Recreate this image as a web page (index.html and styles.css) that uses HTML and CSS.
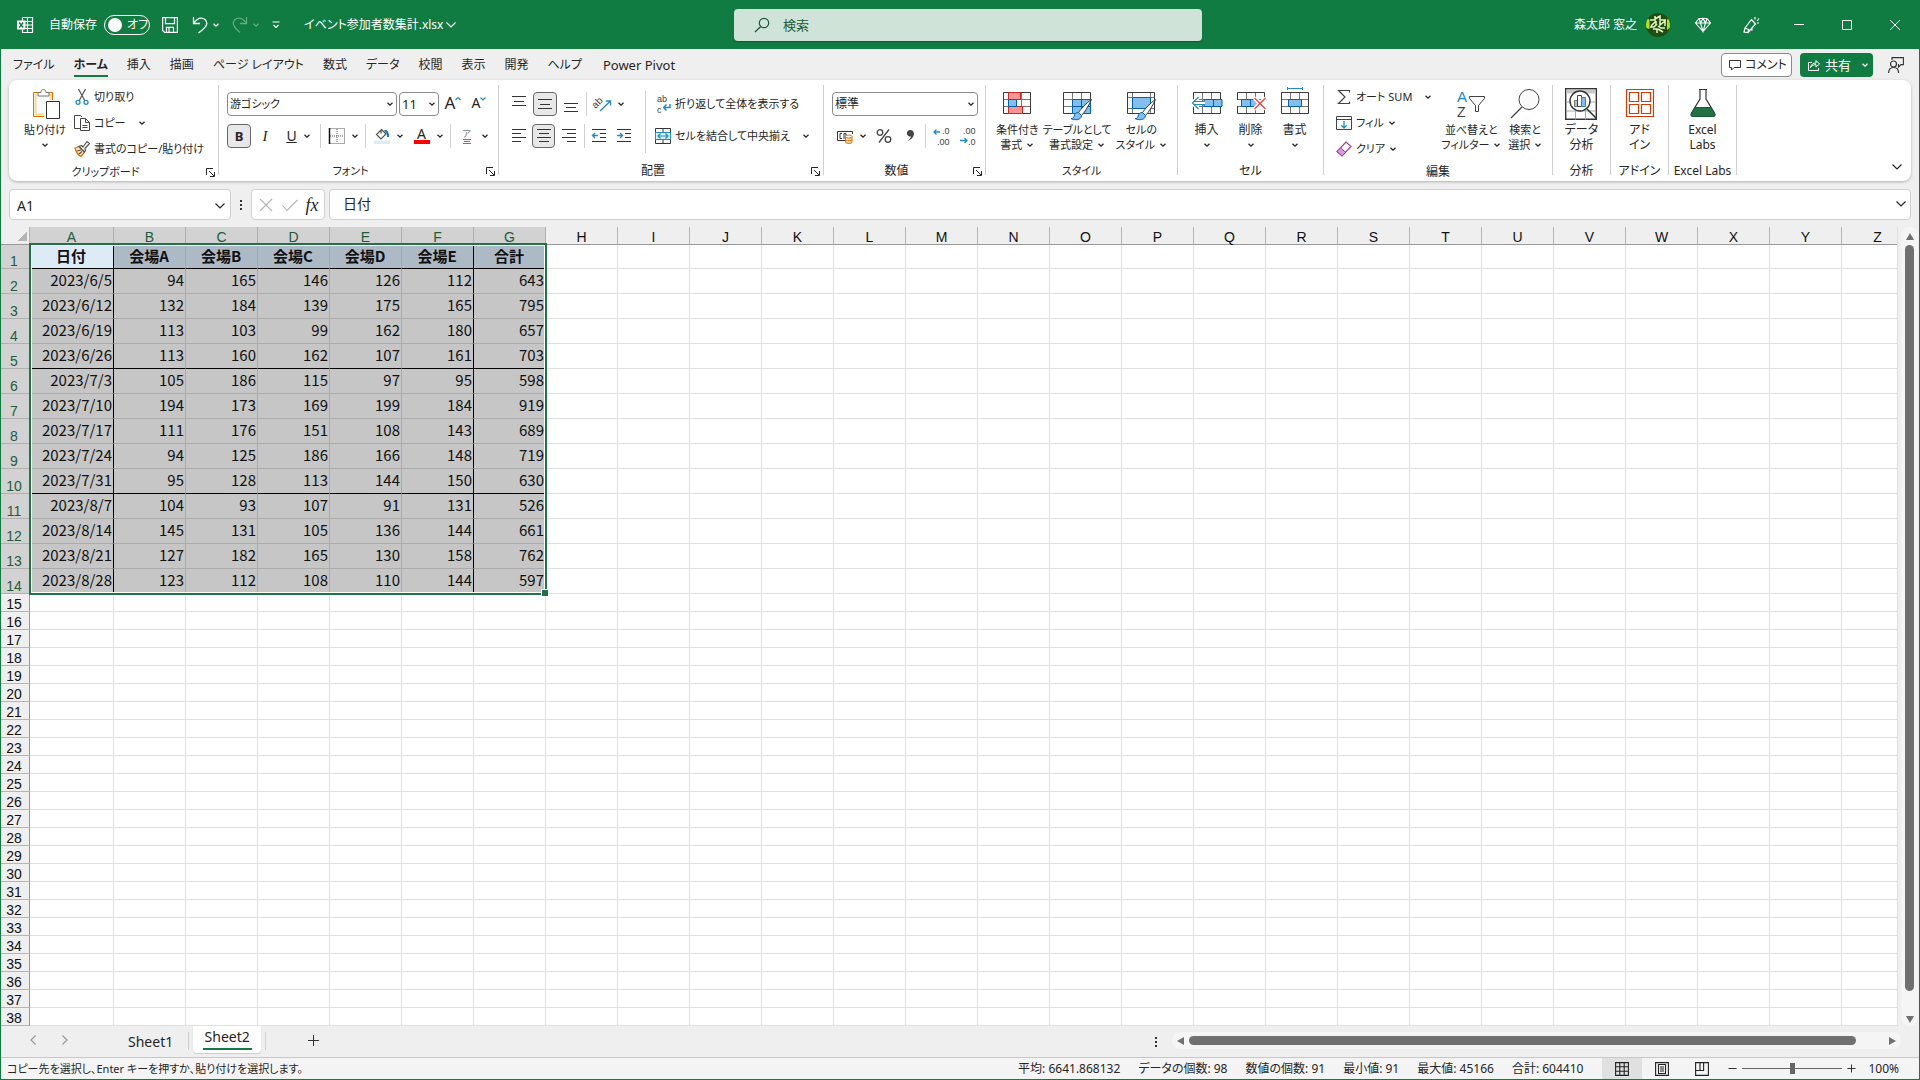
FILE: index.html
```html
<!DOCTYPE html>
<html lang="ja">
<head>
<meta charset="utf-8">
<title>イベント参加者数集計.xlsx</title>
<link rel="stylesheet" href="styles.css">
</head>
<body>
<svg class="sprite" aria-hidden="true">
  <symbol id="chev" viewBox="0 0 8 8"><path d="M1.5 2.7 4 5.2 6.500 2.700" fill="none" stroke="currentColor" stroke-width="1.3"/></symbol>
  <symbol id="chev-lg" viewBox="0 0 12 12"><path d="M1.500 3.500 6 8l4.500-4.500" fill="none" stroke="currentColor" stroke-width="1.200"/></symbol>
  <symbol id="launch" viewBox="0 0 9 9"><path d="M.5 7V.5H7M3 3l5 5M8.500 4v4.500H4" fill="none" stroke="currentColor"/></symbol>
  <symbol id="sheet" viewBox="0 0 32 32"><path d="M2.500 4.500h27v21h-27z" fill="#fafafa" stroke="#3b3b3b"/><path d="M11.500 5v20M20.500 5v20M3 11.500h26M3 18.500h26" stroke="#797774"/></symbol>
  <symbol id="brush" viewBox="0 0 24 24"><path d="M22.500 1.500C17 5 12 11 9.500 14.500l3 3C16 14 20 7 22.500 1.500z" fill="#fff" stroke="#3b3b3b"/><path d="M9.500 14.500c-3 0-4 1.500-4.500 4-.3 1.500-1.500 2-3 2 2.500 2 10.500 2 10.500-3z" fill="#83beec" stroke="#0063b1"/></symbol>
</svg>

<div class="window">
  <header class="titlebar">
    <div class="title-left">
      <svg class="i16 app" viewBox="0 0 16 16"><path d="M5.500.5h10v15h-10v-15M10.500.5v15M5.500 4.500h10M5.500 8h10M5.500 11.500h10" fill="none" stroke="#fff" stroke-width="1.200"/><path d="M0 3.500h8.500v9H0z" fill="#fff"/><path d="m2.200 5.500 4 5M6.200 5.500l-4 5" stroke="#107c41" stroke-width="1.400"/></svg>
      <label class="autosave">自動保存<span class="toggle"><input type="checkbox"><span class="knob"></span>オフ</span></label>
      <button class="tb save" aria-label="上書き保存"><svg class="i16" viewBox="0 0 16 16"><path d="M.6.600h14.800v14.800H2.600l-2-2zM3.500.600v6h9v-6M4.500 15.400v-5h7v5M7 10.400v5" fill="none" stroke="#fff" stroke-width="1.200"/></svg></button>
      <button class="tb" aria-label="元に戻す"><svg class="i16" viewBox="0 0 16 16"><path d="M1.500 0v6.500H8M1.500 6.500C4 3 6 1.200 9 1.200c3.500 0 5.800 2.500 5.800 5.300C14.800 9.500 12 12 6.500 16" fill="none" stroke="#fff" stroke-width="1.300"/></svg><svg class="c8"><use href="#chev"/></svg></button>
      <button class="tb dim" aria-label="やり直し"><svg class="i16" viewBox="0 0 16 16"><path d="M14.500 0v6.500H8M14.500 6.500C12 3 10 1.200 7 1.200c-3.500 0-5.800 2.500-5.800 5.300C1.200 9.500 4 12 8 15.500" fill="none" stroke="#fff" stroke-width="1.300"/></svg><svg class="c8"><use href="#chev"/></svg></button>
      <button class="tb" aria-label="クイック アクセス"><svg class="c8" viewBox="0 0 8 8"><path d="M.5 1h7M1.500 4 4 6.500 6.500 4" fill="none" stroke="#fff" stroke-width="1.200"/></svg></button>
      <button class="tb filename">イベント参加者数集計.xlsx<svg class="c12"><use href="#chev-lg"/></svg></button>
    </div>
    <label class="search"><svg class="i16" viewBox="0 0 16 16"><circle cx="10" cy="6" r="4.700" fill="none" stroke="#185c37" stroke-width="1.200"/><path d="M6.700 9.500 1 15" stroke="#185c37" stroke-width="1.200"/></svg><input type="text" placeholder="検索" aria-label="検索"></label>
    <div class="title-right">
      <span>森太郎 窓之</span>
      <svg class="avatar" viewBox="0 0 24 24"><circle cx="12" cy="12" r="12" fill="#1f4d12"/><path d="M2 5.500A12 12 0 0 0 .5 15l3 1V7zM22 5.500A12 12 0 0 1 23.500 15L21 17V7z" fill="#b5e61d"/><path d="M4 7h5V3M9 6l5-3v4h6M5 13l5-5M10 8v4M4 14h4l3-3M14 8v4l5-4v5M12 13l3 2h4M7 16h4v4M12 16l5 3" fill="none" stroke="#e9f7c8" stroke-width="1.500"/></svg>
      <button class="win" aria-label="プレミアム"><svg class="i16" viewBox="0 0 16 16"><path d="M4 1.500h8l3.500 4.500L8 14.500.5 6zM.5 6h15M4 1.500 5.500 6 8 14.500 10.500 6 12 1.500M5.500 6 8 1.500 10.500 6" fill="none" stroke="#fff" stroke-width="1.100"/></svg></button>
      <button class="win" aria-label="近日公開"><svg class="i16" viewBox="0 0 16 16"><path d="M8.500 2.500 2 11l-1 4 4 .500L12.500 7zM2 11l3.500 1.500L5 15.500M6 13h3v-2M12 0v2.500M14 4l2-2.500M14 6h2" fill="none" stroke="#fff" stroke-width="1.200"/></svg></button>
      <button class="win" aria-label="最小化"><svg class="i16" viewBox="0 0 16 16"><path d="M3 7.500h10" stroke="#fff"/></svg></button>
      <button class="win" aria-label="最大化"><svg class="i16" viewBox="0 0 16 16"><path d="M3.500 3.500h9v9h-9z" fill="none" stroke="#fff"/></svg></button>
      <button class="win" aria-label="閉じる"><svg class="i16" viewBox="0 0 16 16"><path d="m3 3 10 10M13 3 3 13" stroke="#fff"/></svg></button>
    </div>
  </header>

  <nav class="tabs">
    <a href="#">ファイル</a><a href="#" class="active">ホーム</a><a href="#">挿入</a><a href="#">描画</a><a href="#">ページ レイアウト</a><a href="#">数式</a><a href="#">データ</a><a href="#">校閲</a><a href="#">表示</a><a href="#">開発</a><a href="#">ヘルプ</a><a href="#" class="pivot">Power Pivot</a>
    <span class="grow"></span>
    <button class="comment"><svg class="c12" viewBox="0 0 12 12"><path d="M.5 1.500h11v7H5L2.500 11V8.500h-2z" fill="none" stroke="#333"/></svg>コメント</button>
    <button class="share"><svg class="c12" viewBox="0 0 12 12"><path d="M4 3.500H.5v8h10V9M2.500 8.500C3 5.500 5 4 8 4V1.500L11.500 5 8 8V5.700C5.500 5.700 3.500 6.500 2.500 8.500z" fill="none" stroke="#fff"/></svg>共有<svg class="c8"><use href="#chev"/></svg></button>
    <button class="present" aria-label="ユーザー"><svg class="i16" viewBox="0 0 16 16"><path d="M4 3V.600h11.400v7H13l-2.500 2.500V7" fill="none" stroke="#333" stroke-width="1.100"/><circle cx="5.500" cy="7" r="3" fill="none" stroke="#333" stroke-width="1.200"/><path d="M.6 16c0-3.500 2-5.500 5-5.500s5 2 5 5.500" fill="none" stroke="#333" stroke-width="1.200"/></svg></button>
  </nav>

  <section class="ribbon">
    <div class="group clip">
      <div class="body">
        <button class="big"><svg class="i32" viewBox="0 0 32 32"><path d="M5 5h18v24H5z" fill="#fafafa"/><path d="M15 28.500H4.500v-24h19V12" fill="none" stroke="#e07000"/><path d="M6.500 6v20.500H15M21.500 6v6" fill="none" stroke="#f8db8f" stroke-width="2"/><path d="M9 8V4.500h3c0-4 5-4 5 0h3V8z" fill="#fff" stroke="#777"/><path d="M17.500 13.500h13v17h-13z" fill="#fff" stroke="#333"/></svg>貼り付け<svg class="c8"><use href="#chev"/></svg></button>
        <div class="stack">
          <button class="small"><svg class="i16" viewBox="0 0 16 16"><path d="M4.500 0 11 12M11.500 0 5 12" stroke="#555" stroke-width="1.200"/><circle cx="4" cy="13.300" r="2" fill="none" stroke="#1e8bcd" stroke-width="1.300"/><circle cx="12" cy="13.300" r="2" fill="none" stroke="#1e8bcd" stroke-width="1.300"/></svg>切り取り</button>
          <button class="small"><svg class="i16" viewBox="0 0 16 16"><path d="M6 13.500H.5V.5h6L8 2M6.500 3.500h5l4 4v8h-9zM11.500 3.500v4h4M8.500 10.500h5M8.500 12.500h5" fill="none" stroke="#444"/></svg>コピー<svg class="c8 far"><use href="#chev"/></svg></button>
          <button class="small"><svg class="i16" viewBox="0 0 16 16"><path d="m1 7 4-1.500 5.500 5.500L7 15.500C4 14 2 11 1 7z" fill="#fbe3b8" stroke="#e07000" stroke-width="1.300"/><path d="m5 5.500 2.500-1L9 6l4-5.500 2.500 2L11 7.500l.5 2-1 1.500zM3 10l4-1M5 13l3-2.500" fill="none" stroke="#555" stroke-width="1.200"/></svg>書式のコピー/貼り付け</button>
        </div>
      </div>
      <div class="caption">クリップボード<button class="launch" aria-label="クリップボード設定"><svg class="c9"><use href="#launch"/></svg></button></div>
    </div>
    <span class="sep"></span>

    <div class="group font">
      <div class="body rows">
        <div class="row">
          <span class="combo fname"><input type="text" value="游ゴシック" aria-label="フォント名"><svg class="c8"><use href="#chev"/></svg></span>
          <span class="combo fsize"><input type="text" value="11" aria-label="フォント サイズ"><svg class="c8"><use href="#chev"/></svg></span>
          <button class="ib glyph-lg" aria-label="拡大">A<svg class="c6" viewBox="0 0 6 6"><path d="M.5 4 3 1.500 5.500 4" fill="none" stroke="#1e8bcd" stroke-width="1.200"/></svg></button>
          <button class="ib glyph-md" aria-label="縮小">A<svg class="c6" viewBox="0 0 6 6"><path d="M.5 1.500 3 4l2.500-2.500" fill="none" stroke="#1e8bcd" stroke-width="1.200"/></svg></button>
        </div>
        <div class="row">
          <button class="ib on bold">B</button>
          <button class="ib italic">I</button>
          <button class="ib split under"><u>U</u><svg class="c8"><use href="#chev"/></svg></button>
          <span class="bar"></span>
          <button class="ib split" aria-label="罫線"><svg class="i16" viewBox="0 0 16 16"><path d="M.5.500h15v15M8 1v14M1 8h14M.5 15.500h15" fill="none" stroke="#555" stroke-dasharray="1 1"/><path d="M.5 0v16" stroke="#111" stroke-width="1.500"/></svg><svg class="c8"><use href="#chev"/></svg></button>
          <span class="bar"></span>
          <button class="ib split" aria-label="塗りつぶし"><svg class="i16" viewBox="0 0 16 16"><path d="M0 12.500h16V16H0z" fill="#ddebf7"/><path d="M7 1.500v4M7.500 1.500 12 6l-5 5-4.500-4.500z" fill="none" stroke="#555" stroke-width="1.200"/><path d="M10.500 3c2-.5 3.500 1 3.500 6" fill="none" stroke="#1070b8" stroke-width="2"/></svg><svg class="c8"><use href="#chev"/></svg></button>
          <button class="ib split fcolor"><span>A</span><svg class="c8"><use href="#chev"/></svg></button>
          <span class="bar"></span>
          <button class="ib split ruby"><span>ア<i></i><i class="short"></i><i></i></span><svg class="c8"><use href="#chev"/></svg></button>
        </div>
      </div>
      <div class="caption">フォント<button class="launch" aria-label="フォント設定"><svg class="c9"><use href="#launch"/></svg></button></div>
    </div>
    <span class="sep"></span>

    <div class="group align">
      <div class="body">
        <div class="rows">
          <div class="row">
            <button class="ib" aria-label="上揃え"><svg class="i16" viewBox="0 0 16 16"><path d="M1 .5h14M3 5.500h10M1 9.500h14" stroke="#333"/></svg></button>
            <button class="ib on" aria-label="上下中央揃え"><svg class="i16" viewBox="0 0 16 16"><path d="M1 3.500h14M3 8.500h10M1 12.500h14" stroke="#333"/></svg></button>
            <button class="ib" aria-label="下揃え"><svg class="i16" viewBox="0 0 16 16"><path d="M1 7.500h14M3 11.500h10M1 15.500h14" stroke="#333"/></svg></button>
            <span class="bar"></span>
            <button class="ib split" aria-label="方向"><svg class="i16" viewBox="0 0 16 16"><text x="-2" y="9" transform="rotate(-45 4 8)" font-size="10" fill="#444">ab</text><path d="m5 15 10-9.500M11 5h4.500v4.500" fill="none" stroke="#1e8bcd" stroke-width="1.300"/></svg><svg class="c8"><use href="#chev"/></svg></button>
          </div>
          <div class="row">
            <button class="ib" aria-label="左揃え"><svg class="i16" viewBox="0 0 16 16"><path d="M1 1.500h14M1 5.500h9M1 9.500h14M1 13.500h9" stroke="#333"/></svg></button>
            <button class="ib on" aria-label="中央揃え"><svg class="i16" viewBox="0 0 16 16"><path d="M1 1.500h14M3 5.500h10M1 9.500h14M3 13.500h10" stroke="#333"/></svg></button>
            <button class="ib" aria-label="右揃え"><svg class="i16" viewBox="0 0 16 16"><path d="M1 1.500h14M6 5.500h9M1 9.500h14M6 13.500h9" stroke="#333"/></svg></button>
            <span class="bar"></span>
            <button class="ib" aria-label="インデントを減らす"><svg class="i16" viewBox="0 0 16 16"><path d="M1 1.500h14M9 5.500h6M9 9.500h6M1 13.500h14" stroke="#333"/><path d="M7 7.500H1.500M4 5 1.500 7.500 4 10" fill="none" stroke="#1e8bcd" stroke-width="1.300"/></svg></button>
            <button class="ib" aria-label="インデントを増やす"><svg class="i16" viewBox="0 0 16 16"><path d="M1 1.500h14M9 5.500h6M9 9.500h6M1 13.500h14" stroke="#333"/><path d="M1 7.500h5.500M4 5l2.500 2.500L4 10" fill="none" stroke="#1e8bcd" stroke-width="1.300"/></svg></button>
          </div>
        </div>
        <span class="bar tall"></span>
        <div class="rows">
          <button class="small"><svg class="i16" viewBox="0 0 16 16"><text x="2" y="6" font-size="9" fill="#444">ab</text><text x="2" y="17" font-size="9" fill="#444">c</text><path d="M15 8v3.500H9M11.500 8.500 8.700 11.500l2.800 3" fill="none" stroke="#1e8bcd" stroke-width="1.500"/></svg>折り返して全体を表示する</button>
          <button class="small"><svg class="i16" viewBox="0 0 16 16"><path d="M.5.500h15v15H.5zM8 1v3M8 12v3" fill="none" stroke="#333"/><path d="M.5 4.500h15v7H.5z" fill="#ddeffb" stroke="#1e8bcd"/><path d="M3 8h10M5.500 5.500 3 8l2.500 2.500M10.500 5.500 13 8l-2.500 2.500" fill="none" stroke="#1e8bcd" stroke-width="1.200"/></svg>セルを結合して中央揃え<svg class="c8 far"><use href="#chev"/></svg></button>
        </div>
      </div>
      <div class="caption">配置<button class="launch" aria-label="配置設定"><svg class="c9"><use href="#launch"/></svg></button></div>
    </div>
    <span class="sep"></span>

    <div class="group number">
      <div class="body rows">
        <div class="row"><span class="combo nfmt"><input type="text" value="標準" aria-label="数値の書式"><svg class="c8"><use href="#chev"/></svg></span></div>
        <div class="row">
          <button class="ib split" aria-label="通貨"><svg class="i16" viewBox="0 0 16 16"><path d="M8 12.500H.5v-9h15V6" fill="none" stroke="#333"/><path d="M5 5.500H3v5h2M7 11V5.500h2V9" fill="none" stroke="#333"/><path d="M8.500 8.500v5.500c0 2 6.500 2 6.500 0V8.500" fill="#fbd9a8" stroke="#e07000"/><ellipse cx="11.700" cy="8.500" rx="3.300" ry="1.500" fill="#fff" stroke="#e07000"/><path d="M8.500 11.500c0 1.800 6.500 1.800 6.500 0" fill="none" stroke="#e07000"/></svg><svg class="c8"><use href="#chev"/></svg></button>
          <button class="ib pct" aria-label="パーセント"><svg class="i16" viewBox="0 0 16 16"><circle cx="4" cy="4.500" r="2.800" fill="none" stroke="#444" stroke-width="1.300"/><circle cx="12" cy="11.500" r="2.800" fill="none" stroke="#444" stroke-width="1.300"/><path d="M13 1.500 3 14.500" stroke="#444" stroke-width="1.300"/></svg></button>
          <button class="ib" aria-label="桁区切り"><svg class="i16" viewBox="0 0 16 16"><path d="M8.200 2a3.300 3.300 0 1 0 .8 6.500c-.3 1.500-1.500 3-4 4.500 4.500-1 7-4.200 7-7.500A3.500 3.500 0 0 0 8.200 2z" fill="#444"/></svg></button>
          <span class="bar"></span>
          <button class="ib" aria-label="小数点以下を増やす"><svg class="i16" viewBox="0 0 16 16"><text x="9" y="6" font-size="9" fill="#444">.0</text><text x="4" y="17" font-size="9" fill="#444">.00</text><path d="M7 4H1M3.500 1.500 1 4l2.500 2.500" fill="none" stroke="#1e8bcd" stroke-width="1.300"/></svg></button>
          <button class="ib" aria-label="小数点以下を減らす"><svg class="i16" viewBox="0 0 16 16"><text x="4" y="6" font-size="9" fill="#444">.00</text><text x="9" y="17" font-size="9" fill="#444">.0</text><path d="M1 12.500h7M5.500 10 8 12.500 5.500 15" fill="none" stroke="#1e8bcd" stroke-width="1.300"/></svg></button>
        </div>
      </div>
      <div class="caption">数値<button class="launch" aria-label="数値設定"><svg class="c9"><use href="#launch"/></svg></button></div>
    </div>
    <span class="sep"></span>

    <div class="group styles">
      <div class="body">
        <button class="big"><svg class="i32" viewBox="0 0 32 32"><use href="#sheet"/><path d="M7.500 4.500h12v7h-12zM7.500 18.500h14v7h-14z" fill="#ff9494" stroke="#d1291f"/><path d="M7.500 11.500h8v7h-8z" fill="#83beec" stroke="#0063b1"/></svg>条件付き<span>書式<svg class="c8"><use href="#chev"/></svg></span></button>
        <button class="big"><svg class="i32" viewBox="0 0 32 32"><use href="#sheet"/><path d="M11.500 11.500h18v14h-18zM20.500 11.500v14M11.500 18.500h18" fill="#83beec" stroke="#0063b1"/><use href="#brush" x="8" y="10" width="24" height="24"/></svg>テーブルとして<span>書式設定<svg class="c8"><use href="#chev"/></svg></span></button>
        <button class="big"><svg class="i32" viewBox="0 0 32 32"><path d="M2.500 4.500h27v21h-27z" fill="#fafafa" stroke="#3b3b3b"/><path d="M7.500 5v20M25.500 5v20M3 9.500h26M3 20.500h26" stroke="#797774"/><path d="M7.500 9.500h18v11h-18z" fill="#83beec" stroke="#0063b1"/><use href="#brush" x="8" y="10" width="24" height="24"/></svg>セルの<span>スタイル<svg class="c8"><use href="#chev"/></svg></span></button>
      </div>
      <div class="caption">スタイル</div>
    </div>
    <span class="sep"></span>

    <div class="group cells">
      <div class="body">
        <button class="big"><svg class="i32" viewBox="0 0 32 32"><use href="#sheet"/><path d="M13 11.500h18v7H13zM22.500 12v6" fill="#83beec" stroke="#0063b1"/><path d="M14 15H2M7.500 9 1.500 15l6 6" fill="none" stroke="#fff" stroke-width="4"/><path d="M14 13.500H3.500M14 16.500H3.500M7.500 9 1.500 15l6 6" fill="none" stroke="#1e8bcd" stroke-width="1.200"/></svg>挿入<svg class="c8"><use href="#chev"/></svg></button>
        <button class="big"><svg class="i32" viewBox="0 0 32 32"><use href="#sheet"/><path d="M1 12h31v6H1z" fill="#fff"/><path d="M6.500 11.500H20l3 3.500-3 3.500H6.500zM15.500 12v6" fill="#83beec" stroke="#0063b1"/><path d="m19.500 10 11 11M30.500 10l-11 11" stroke="#fff" stroke-width="4"/><path d="m19.500 10 11 11M30.500 10l-11 11" stroke="#e8403a" stroke-width="1.200"/></svg>削除<svg class="c8"><use href="#chev"/></svg></button>
        <button class="big"><svg class="i32" viewBox="0 0 32 32"><use href="#sheet"/><path d="M9.500 11.500h13v7h-13z" fill="#83beec" stroke="#0063b1"/><path d="M8.500.5h15M8.500-1v3M23.500-1v3" stroke="#1e8bcd"/></svg>書式<svg class="c8"><use href="#chev"/></svg></button>
      </div>
      <div class="caption">セル</div>
    </div>
    <span class="sep"></span>

    <div class="group edit">
      <div class="body">
        <div class="stack">
          <button class="small"><svg class="i16" viewBox="0 0 16 16"><path d="M13.500 3.500v-2h-11L9 8l-6.500 6.500h11v-2" fill="none" stroke="#444" stroke-width="1.200"/></svg>オート SUM<svg class="c8 far"><use href="#chev"/></svg></button>
          <button class="small"><svg class="i16" viewBox="0 0 16 16"><path d="M.5 1.500h15v13H.5zM.5 4.500h15" fill="none" stroke="#444"/><path d="M8 6v7M5.300 10.300 8 13l2.700-2.700" fill="none" stroke="#1e8bcd" stroke-width="1.300"/></svg>フィル<svg class="c8"><use href="#chev"/></svg></button>
          <button class="small"><svg class="i16" viewBox="0 0 16 16"><path d="M1 10.500 10 1l5 4.500-9 9.500z" fill="#fff" stroke="#a33ca8" stroke-width="1.200"/><path d="m1 10.500 3.500-3.700 5 4.500L6 15z" fill="#d99ade" stroke="#a33ca8"/></svg>クリア<svg class="c8"><use href="#chev"/></svg></button>
        </div>
        <button class="big"><svg class="i32" viewBox="0 0 32 32"><text x="2" y="14" font-size="15" fill="#1e8bcd">A</text><text x="2" y="29" font-size="14" fill="#444">Z</text><path d="M14.500 8.500h15v2l-6 7v6h-3v-6l-6-7z" fill="#fafafa" stroke="#444"/></svg>並べ替えと<span>フィルター<svg class="c8"><use href="#chev"/></svg></span></button>
        <button class="big"><svg class="i32" viewBox="0 0 32 32"><circle cx="20" cy="11.500" r="10" fill="#fafafa" stroke="#444"/><path d="M13 19 2 30" stroke="#444" stroke-width="1.200"/></svg>検索と<span>選択<svg class="c8"><use href="#chev"/></svg></span></button>
      </div>
      <div class="caption">編集</div>
    </div>
    <span class="sep"></span>

    <div class="group narrow">
      <div class="body">
        <button class="big"><svg class="i32" viewBox="0 0 32 32"><path d="M.7.700h30.600v30.600H.7z" fill="#fff" stroke="#333" stroke-width="1.400"/><path d="M1.500 1.500h29v4h-29z" fill="#c8c8c8"/><path d="M1 14h30M1 23h30M10.500 5.500v26M20.500 5.500v26" stroke="#aaa"/><circle cx="15" cy="13" r="10" fill="#fff" stroke="#333" stroke-width="1.400"/><path d="M9.500 12.500h4v6h-4z" fill="#bbb" stroke="#777"/><path d="M12.500 7.500h4v11h-4z" fill="#fff" stroke="#444"/><path d="M16.500 9.500h4v9h-4z" fill="#83beec" stroke="#1e8bcd"/><path d="m22 21 9.500 9.500" stroke="#333" stroke-width="1.600"/></svg>データ<span>分析</span></button>
      </div>
      <div class="caption">分析</div>
    </div>
    <span class="sep"></span>

    <div class="group narrow">
      <div class="body">
        <button class="big"><svg class="i32" viewBox="0 0 32 32"><path d="M2.500 1.500h27v27h-27zM5.500 4.500h9v9h-9zM17.500 4.500h9v9h-9zM5.500 16.500h9v9h-9zM17.500 16.500h9v9h-9z" fill="none" stroke="#d83b01" stroke-width="1.200"/></svg>アド<span>イン</span></button>
      </div>
      <div class="caption">アドイン</div>
    </div>
    <span class="sep"></span>

    <div class="group labs">
      <div class="body">
        <button class="big"><svg class="i32" viewBox="0 0 32 32"><path d="M12 1.500h8M13 1.500V11L4.500 25c-1 2 0 3.500 2 3.500h19c2 0 3-1.500 2-3.500L19 11V1.500" fill="#fff" stroke="#333" stroke-width="1.200"/><path d="M8 19.500h16l4 7c.3 1.200-.5 2-2 2H6c-1.500 0-2.300-.8-2-2z" fill="#217346" stroke="#185c37"/></svg>Excel<span>Labs</span></button>
      </div>
      <div class="caption">Excel Labs</div>
    </div>
    <span class="sep"></span>
    <span class="grow"></span>
    <button class="collapse" aria-label="リボンを折りたたむ"><svg class="c12"><use href="#chev-lg"/></svg></button>
  </section>

  <section class="formula">
    <span class="box name"><input type="text" value="A1" aria-label="名前ボックス"><svg class="c12"><use href="#chev-lg"/></svg></span>
    <span class="dots"><i></i><i></i><i></i></span>
    <span class="box fx">
      <button aria-label="キャンセル"><svg class="i16" viewBox="0 0 16 16"><path d="m2 2 12 12M14 2 2 14" stroke="#b5b5b5" stroke-width="1.100"/></svg></button>
      <button aria-label="入力"><svg class="i16" viewBox="0 0 16 16"><path d="m.5 8.500 4.500 5L15.500 3" fill="none" stroke="#b5b5b5" stroke-width="1.100"/></svg></button>
      <button class="fxb">fx</button>
    </span>
    <span class="box entry"><input type="text" value="日付" aria-label="数式バー"><svg class="c12"><use href="#chev-lg"/></svg></span>
  </section>

  <main class="sheet">
    <div class="grid">
      <table id="cells"><colgroup id="cols"></colgroup><thead></thead><tbody></tbody></table>
      <div class="selection"><i class="handle"></i></div>
    </div>
    <div class="vscroll"><button class="up" aria-label="上へ"></button><span class="thumb"></span><button class="down" aria-label="下へ"></button></div>
  </main>

  <div class="sheetbar">
    <button class="nav first-nav" aria-label="前のシート"><svg class="c12 turn-r"><use href="#chev-lg"/></svg></button>
    <button class="nav" aria-label="次のシート"><svg class="c12 turn-l"><use href="#chev-lg"/></svg></button>
    <button class="stab">Sheet1</button><span class="bar"></span>
    <button class="stab current"><span>Sheet2</span></button><span class="bar"></span>
    <button class="add" aria-label="新しいシート"><svg class="c12" viewBox="0 0 12 12"><path d="M5.500 0v11M0 5.500h11" stroke="#333"/></svg></button>
    <span class="grow"></span>
    <span class="dots"><i></i><i></i><i></i></span>
    <div class="hscroll"><button class="left" aria-label="左へ"></button><span class="thumb"></span><button class="right" aria-label="右へ"></button></div>
  </div>

  <footer class="status">
    <span class="message">コピー先を選択し、Enter キーを押すか、貼り付けを選択します。</span>
    <span class="grow"></span>
    <div class="stats"><span>平均: 6641.868132</span><span>データの個数: 98</span><span>数値の個数: 91</span><span>最小値: 91</span><span>最大値: 45166</span><span>合計: 604410</span></div>
    <button class="view active" aria-label="標準"><svg class="i14" viewBox="0 0 14 14"><path d="M.6.600h12.800v12.800H.6zM4.800.600v12.800M9.200.600v12.800M.6 4.800h12.800M.6 9.200h12.800" fill="none" stroke="#222" stroke-width="1.100"/></svg></button>
    <button class="view" aria-label="ページ レイアウト"><svg class="i14" viewBox="0 0 14 14"><path d="M.6.600h12.800v12.800H.6zM3.500 2.500h7v9h-7zM5 5h4M5 7h4M5 9h4" fill="none" stroke="#222" stroke-width="1.100"/></svg></button>
    <button class="view" aria-label="改ページ プレビュー"><svg class="i14" viewBox="0 0 14 14"><path d="M.6.600h12.800v12.800H.6zM.6 8.500h8V.600M5 .600v7.900" fill="none" stroke="#222" stroke-width="1.100"/></svg></button>
    <button class="zoomb" aria-label="縮小"><svg class="c9" viewBox="0 0 9 9"><path d="M.5 4.500h8" stroke="#333"/></svg></button>
    <input class="zoom" type="range" min="0" max="100" value="50" aria-label="ズーム">
    <button class="zoomb" aria-label="拡大"><svg class="c9" viewBox="0 0 9 9"><path d="M.5 4.500h8M4.500.500v8" stroke="#333"/></svg></button>
    <span class="pctage">100%</span>
  </footer>
</div>
<script src="script.js"></script>
</body>
</html>
```
FILE: styles.css
```css
* { box-sizing: border-box; }
body {
  margin: 0;
  font: 12px/16px "Noto Sans", "Noto Sans CJK JP", sans-serif;
  font-feature-settings: "palt";
  color: #262626;
  background: #efefef;
}
button, input { font: inherit; font-feature-settings: inherit; color: inherit; border: 0; padding: 0; margin: 0; background: none; outline: 0; white-space: nowrap; }
input { min-width: 0; }
svg { flex: none; overflow: visible; }
svg text { font-family: "Liberation Sans", Arial, sans-serif; }
.sprite { position: absolute; width: 0; height: 0; }
.grow { flex: 1; }
.c6 { width: 6px; height: 6px; }
.c8 { width: 8px; height: 8px; }
.c9 { width: 9px; height: 9px; }
.c12 { width: 12px; height: 12px; }
.i14 { width: 14px; height: 14px; }
.i16 { width: 16px; height: 16px; }
.i32 { width: 32px; height: 32px; }

.window { display: flex; flex-direction: column; height: 100vh; border: solid #107c41; border-width: 0 1px 1px; overflow: hidden; }

/* Title bar */
.titlebar { display: flex; flex: none; align-items: center; height: 49px; padding-left: 16px; background: #107c41; color: #fff; }
.title-left, .title-right { display: flex; flex: 1; align-items: center; white-space: nowrap; }
.title-left { gap: 12px; }
.title-left .app { margin-right: 4px; }
.title-left .tb { display: flex; align-items: center; gap: 4px; height: 24px; }
.autosave { display: flex; align-items: center; gap: 7px; }
.toggle { display: flex; align-items: center; width: 46px; height: 20px; padding-left: 3px; gap: 5px; border: 1px solid #fff; border-radius: 10px; }
.toggle input { position: absolute; opacity: 0; }
.knob { width: 14px; height: 14px; border-radius: 7px; background: #fff; }
.title-left .dim { opacity: .35; }
.title-left .save { margin-right: 2px; }
.title-left .filename { margin-left: 12px; gap: 2px; }
.search { display: flex; align-items: center; width: 468px; height: 32px; padding-left: 20px; gap: 13px; background: #cfe3d8; border-radius: 4px; box-shadow: 0 1px 1px #0b5c30; }
.search input { flex: 1; font-size: 13px; }
.search input::placeholder { color: #185c37; opacity: 1; }
.title-right { justify-content: flex-end; }
.avatar { width: 24px; height: 24px; margin: 0 9px; }
.win { display: flex; align-items: center; justify-content: center; width: 48px; height: 40px; }

/* Ribbon tabs */
.tabs { display: flex; flex: none; align-items: center; height: 31px; padding: 0 13px 0 2px; white-space: nowrap; }
.tabs a { display: flex; align-items: center; height: 24px; margin: 0 9px 0 10px; color: inherit; text-decoration: none; border: solid transparent; border-width: 2px 0; }
.tabs a.active { font-weight: bold; border-bottom-color: #107c41; }
.tabs .pivot { margin-left: 12px; font-size: 13px; }
.comment, .share { display: flex; align-items: center; height: 24px; border-radius: 4px; }
.comment { width: 71px; padding-left: 7px; gap: 4px; background: #fff; border: 1px solid #8a8a8a; margin-right: 8px; }
.share { width: 73px; padding-left: 8px; gap: 5px; background: #107c41; color: #fff; margin-right: 13px; font-size: 13px; }
.share .c8 { margin-left: 5px; }
.present { display: flex; padding: 2px; }

/* Ribbon */
.ribbon { display: flex; flex: none; height: 101px; margin: 0 8px; background: #fff; border-radius: 8px; box-shadow: 0 1px 3px #b0b0b0; }
.sep { width: 1px; margin: 5px 0 6px; background: #d0d0d0; }
.group { display: flex; flex-direction: column; }
.body { display: flex; flex: 1; }
.caption { display: flex; align-items: center; justify-content: center; position: relative; height: 20px; white-space: nowrap; }
.launch { position: absolute; right: 3px; top: 6px; display: flex; }
.big { display: flex; flex-direction: column; align-items: center; padding-top: 8px; line-height: 15px; }
.big .i32 { margin-bottom: 2px; }
.big > .c8 { margin-top: 4px; }
.big span .c8 { margin-left: 4px; }
.stack { display: flex; flex-direction: column; padding-top: 4px; }
.small { display: flex; align-items: center; height: 26px; gap: 4px; font-size: 11px; }
.small .far { margin-left: 8px; }
.rows { display: flex; flex-direction: column; gap: 8px; padding-top: 12px; }
.rows .small { height: 24px; }
.row { display: flex; gap: 2px; height: 24px; }
.ib { display: flex; align-items: center; justify-content: center; width: 24px; height: 24px; border-radius: 4px; }
.ib.on { background: #e8e8e8; border: 1px solid #666; }
.ib.split { width: 38px; gap: 6px; padding-left: 1px; }
.bar { flex: none; width: 1px; height: 24px; margin: 0 1px; background: #d0d0d0; }
.bar.tall { height: 62px; margin-top: 11px; }
.combo { display: flex; align-items: center; height: 24px; padding: 0 2px; border: 1px solid #8a8a8a; border-radius: 4px; background: #fff; }
.combo input { flex: 1; }

.clip { width: 209px; }
.clip .big { width: 72px; }
.clip .stack { margin-left: -7px; }
.clip .big, .styles .big, .edit .big { font-size: 11px; }
.clip .caption, .font .caption, .styles .caption { font-size: 11px; }
.clip .caption, .font .caption, .align .caption, .number .caption { padding-right: 16px; }
.font { width: 279px; }
.font .body, .align .body, .number .body { padding-left: 8px; }
.fname { width: 170px; }
.fname input { font-size: 11px; }
.fsize { width: 40px; }
.fsize input { font-size: 13px; }
.glyph-lg, .glyph-md { align-items: flex-start; line-height: 22px; }
.glyph-lg { font-size: 17px; }
.glyph-md { font-size: 14px; }
.glyph-lg .c6, .glyph-md .c6 { margin-top: 4px; }
.bold { font-weight: bold; font-size: 13px; }
.italic { font: italic 15px "Liberation Serif", serif; }
.under { font-size: 14px; }
.fcolor span { width: 16px; height: 16px; font-size: 14px; line-height: 12px; text-align: center; border-bottom: 4px solid #f00; }
.ruby span { display: flex; flex-direction: column; align-items: center; gap: 1px; width: 16px; font-size: 9px; line-height: 9px; color: #777; }
.ruby i { width: 8px; height: 1px; background: #777; }
.ruby .short { width: 6px; }
.align { width: 324px; }
.align .body { gap: 8px; }
.align > .body > .rows:first-child { width: 129px; }
.number { width: 161px; }
.nfmt { width: 146px; }
.styles { width: 191px; }
.styles .body { justify-content: center; gap: 4px; }
.cells { width: 145px; }
.cells .body { justify-content: center; gap: 12px; }
.edit { width: 228px; }
.edit .body { padding-left: 12px; }
.edit .stack { width: 109px; }
.edit .big { width: 54px; }
.narrow { width: 57px; }
.narrow .body, .labs .body { justify-content: center; }
.labs { width: 67px; }
.collapse { align-self: flex-end; display: flex; padding: 8px; }

/* Formula bar */
.formula { display: flex; flex: none; align-items: center; height: 31px; margin: 8px 8px 7px; }
.box { display: flex; align-items: center; height: 31px; background: #fff; border: 1px solid #d0d0d0; border-radius: 4px; }
.name { width: 222px; padding: 2px 4px 0 7px; }
.name input { flex: 1; font-size: 14px; }
.dots { display: flex; flex-direction: column; gap: 2px; margin: 0 9px; }
.dots i { width: 2px; height: 2px; background: #333; }
.fx { width: 74px; justify-content: center; gap: 8px; margin-right: 4px; }
.fx button { display: flex; }
.fx .fxb { font: italic 18px/20px "Liberation Serif", serif; }
.entry { flex: 1; padding: 0 3px 2px 13px; }
.entry input { flex: 1; font-size: 14px; }

/* Worksheet */
.sheet { display: flex; flex: 1; min-height: 0; }
.grid { position: relative; flex: 1; overflow: hidden; background: #fff; border-right: 1px solid #e0e0e0; }
table { table-layout: fixed; width: 1913px; border-collapse: separate; border-spacing: 0; font-feature-settings: normal; }
.c-head { width: 29px; }
.c-date { width: 84px; }
.c-cell { width: 72px; }
th, td { padding: 0; border: solid #e0e0e0; border-width: 0 1px 1px 0; height: 18px; white-space: nowrap; }
th { font: 14px/14px "Liberation Sans", Arial, sans-serif; background: #efefef; color: #111; vertical-align: bottom; }
tbody th { border-color: #b5b5b5 #999 #b5b5b5; padding-right: 2px; }
thead th { border-color: #999 #b5b5b5; }
th.hit { background: #d2d2d2; color: #1e5c3a; border-color: #b0b0b0; }
.corner { background: linear-gradient(135deg, transparent 50%, #b5b5b5 50%) no-repeat 16px 4px / 10px 10px #efefef; }
tr.tall td, tr.tall th { height: 25px; }
tr.head td, tr.head th { height: 24px; }
tr.tall td { background: #c6c6c6; border-color: #ababab; font: 15px/22px "Noto Sans CJK JP", sans-serif; color: #111; text-align: right; vertical-align: top; padding-right: 1px; }
tr.tall td.blank { background: #fff; border-color: #e0e0e0; }
tr.head td { background: #adb9c5; font-weight: bold; text-align: center; line-height: 22px; }
tr.head td.first { background: #ddebf7; }
tr.tall td.rule-r { border-right-color: #000; }
tr.rule-b td:not(.blank) { border-bottom-color: #000; }
.selection { position: absolute; left: 28px; top: 16px; width: 518px; height: 352px; border: 2px solid #217346; box-shadow: inset 0 0 0 1px #fff; }
.handle { position: absolute; right: -3px; bottom: -3px; width: 6px; height: 6px; background: #217346; outline: 1px solid #fff; }

/* Scroll bars */
.vscroll { display: flex; flex-direction: column; align-items: center; width: 17px; margin: 0 1px 0 3px; padding: 6px 0 3px; gap: 5px; background: #f5f5f5; border-radius: 8px; }
.thumb { background: #707070; border-radius: 5px; }
.vscroll .thumb { flex: 1; width: 9px; margin-bottom: 20px; }
.vscroll button, .hscroll button { width: 0; height: 0; border: 4px solid transparent; }
.vscroll .up { border-bottom: 7px solid #707070; border-top: 0; }
.vscroll .down { border-top: 7px solid #707070; border-bottom: 0; }
.hscroll { display: flex; align-items: center; width: 38%; height: 17px; margin: 6px 18px 0 0; padding: 0 5px; gap: 5px; background: #f5f5f5; border-radius: 8px; }
.hscroll .thumb { flex: 1; height: 9px; margin-right: 28px; }
.hscroll .left { border-right: 7px solid #707070; border-left: 0; }
.hscroll .right { border-left: 7px solid #707070; border-right: 0; }

/* Sheet tabs */
.sheetbar { display: flex; flex: none; height: 31px; align-items: flex-start; }
.sheetbar .nav { display: flex; justify-content: center; width: 32px; padding-top: 8px; color: #999; }
.sheetbar .first-nav { margin-left: 16px; }
.turn-r { transform: rotate(90deg); }
.turn-l { transform: rotate(-90deg); }
.stab { font-size: 14px; height: 27px; line-height: 16px; padding: 5px 15px 0 47px; }
.sheetbar .bar { height: 18px; margin: 6px 0 0; }
.stab.current { width: 68px; margin: 0 4px; padding: 0 0 3px; background: #fff; border-radius: 0 0 4px 4px; box-shadow: 0 1px 1px #ccc; }
.stab.current span { display: inline-block; padding: 0 2px; line-height: 22px; border-bottom: 2px solid #107c41; }
.sheetbar .add { display: flex; padding: 9px 0 0 42px; }
.sheetbar .dots { margin: 11px 15px 0; }

/* Status bar */
.status { display: flex; flex: none; align-items: center; height: 22px; padding: 0 20px 0 6px; background: #f4f4f4; border-top: 1px solid #c8c8c8; white-space: nowrap; }
.message { font-size: 11px; }
.stats { display: flex; gap: 18px; margin-right: 19px; }
.view { display: flex; align-items: center; justify-content: center; width: 40px; height: 21px; }
.view.active { background: #e0e0e0; }
.zoomb { display: flex; }
.view + .zoomb { margin-left: 6px; }
.zoom { appearance: none; width: 100px; height: 12px; margin: 0 5px; background: linear-gradient(#666, #666) no-repeat center / 100% 1px; }
.zoom::-webkit-slider-thumb { appearance: none; width: 5px; height: 11px; background: #666; }
.pctage { margin-left: 12px; }
```
FILE: script.js
```js
const letters = "ABCDEFGHIJKLMNOPQRSTUVWXYZ".split("");
const data = [
  ["日付", "会場A", "会場B", "会場C", "会場D", "会場E", "合計"],
  ["2023/6/5", 94, 165, 146, 126, 112, 643],
  ["2023/6/12", 132, 184, 139, 175, 165, 795],
  ["2023/6/19", 113, 103, 99, 162, 180, 657],
  ["2023/6/26", 113, 160, 162, 107, 161, 703],
  ["2023/7/3", 105, 186, 115, 97, 95, 598],
  ["2023/7/10", 194, 173, 169, 199, 184, 919],
  ["2023/7/17", 111, 176, 151, 108, 143, 689],
  ["2023/7/24", 94, 125, 186, 166, 148, 719],
  ["2023/7/31", 95, 128, 113, 144, 150, 630],
  ["2023/8/7", 104, 93, 107, 91, 131, 526],
  ["2023/8/14", 145, 131, 105, 136, 144, 661],
  ["2023/8/21", 127, 182, 165, 130, 158, 762],
  ["2023/8/28", 123, 112, 108, 110, 144, 597]
];
const ruledRows = [1, 5, 10];

document.getElementById("cols").innerHTML =
  '<col class="c-head"><col class="c-date">' + '<col class="c-cell">'.repeat(25);

document.querySelector("#cells thead").innerHTML =
  '<tr><th class="corner"></th>' +
  letters.map((l, i) => `<th scope="col" class="${i < 7 ? "hit" : ""}">${l}</th>`).join("") +
  "</tr>";

let rows = "";
for (let r = 1; r <= 38; r++) {
  const values = data[r - 1];
  const kind = (values ? "tall" : "") + (r === 1 ? " head" : "") + (ruledRows.includes(r) ? " rule-b" : "");
  rows += `<tr class="${kind}"><th scope="row" class="${values ? "hit" : ""}">${r}</th>`;
  letters.forEach((l, c) => {
    const filled = values && c < 7;
    const cls = filled ? (c === 0 && r === 1 ? "first " : "") + (c === 0 || c === 5 ? "rule-r" : "") : "blank";
    rows += `<td class="${cls}">${filled ? values[c] : ""}</td>`;
  });
  rows += "</tr>";
}
document.querySelector("#cells tbody").innerHTML = rows;
```
